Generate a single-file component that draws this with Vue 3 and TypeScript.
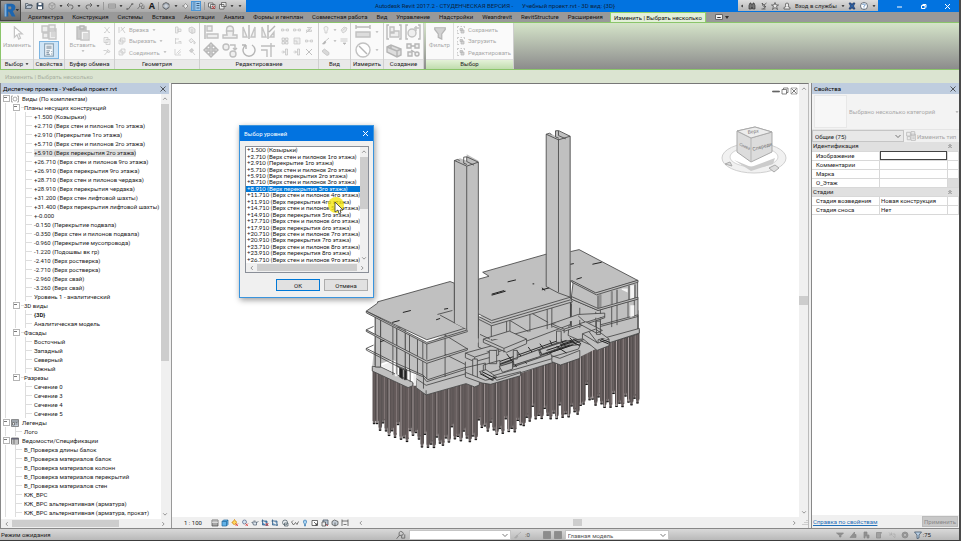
<script setup lang="ts">
import { h, ref, computed } from 'vue'

type Shape = [d: string, fill?: string, stroke?: string]

const G = '#c9c9c9'
const L = '#ececec'
const D = '#4a4a4a'

const shapes: Record<string, Shape[]> = {
  open: [['M1 13V3h5l1 2h6v3M1 13l3-6h11l-3 6z', '#b9c4d0', '#46505c']],
  save: [['M2 2h11l1 1v11H2z', '#465a70', '#2f3c4a'], ['M5 2h6v4H5zM4 9h8v5H4z', '#fff']],
  sync: [['M8 1l6 3v7l-6 4-6-4V4zM8 8v7M8 8l6-4M8 8L2 4', '#c2c2c2', '#8d8d8d']],
  undo: [['M6 2L2 6l4 4M2 6h8q4 0 4 4t-4 4', 'none', D]],
  redo: [['M10 2l4 4-4 4M14 6H6q-4 0-4 4t4 4', 'none', D]],
  dim: [['M1 4h14v8H1zM1 8h14', '#bbb', '#8b8b8b']],
  line: [['M2 14h3L12 4h3M2 12v4M12 2v4', 'none', D]],
  tag: [['M1 14l4-5M5 9V4q2-3 5-1t1 5zM9 9v4h5V7', 'none', '#666']],
  house: [['M8 1l6 3v7l-6 4-6-4V4z', '#9fa9b5', D], ['M2 8h12M8 4v8', 'none', '#eee']],
  section: [['M2 8h4M14 8l-5-5-4 5 4 5z', '#eee', '#777']],
  thin: [['M1 2h6M1 6h6M1 10h6M1 14h6', 'none', '#1c4e83'], ['M9 3h6M9 7h6M9 12h6', 'none', '#183553']],
  closeWin: [['M1 2h9v8H1zM5 5h9v8H5z', '#eee', D], ['M8 8l6 6M14 8l-6 6', 'none', '#d22']],
  switch: [['M1 5h9v9H1zM5 1h9v8H5z', '#eee', D]],
  bino: [['M2 14V7l2-5h2l1 4h2l1-4h2l2 5v7H9v-4H7v4z', '#777', '#333']],
  dish: [['M3 14h8M7 14l3-4M4 2q0 8 8 8zM8 6l5-4', '#ddd', '#444']],
  star: [['M8 1l2 5h5l-4 3 2 6-5-4-5 4 2-6-4-3h5z', '#e9e9e9', '#444']],
  user: [['M8 2q4 0 3 5l-1 2 4 2v3H2v-3l4-2-1-2Q4 2 8 2z', '#eee', '#444']],
  exch: [['M2 2h4l2 4 2-4h4l-3 6 3 6h-4l-2-4-2 4H2l3-6z', '#2c61a5', '#1d3766']],
  help: [['M8 1a7 7 0 1 1 0 14 7 7 0 0 1 0-14z', '#fff', '#345'], ['M5 6q1-3 4-2t0 4L8 9v2M8 12v1', 'none', '#1d5fa8']],
  arrow: [['M5 1v12l3-3 2 5 2-1-2-5h4z', '#fff', '#bcbcbc']],
  props: [['M1 2h6v6H1zM8 1h6v6H8zM2 9h5v5H2zM8 5h7v10H8z', L, '#bdbdbd'], ['M10 8h4M10 10h4M10 12h4', 'none', G]],
  palette: [['M3 1h10v14H3z', '#fff', '#7f9ab0'], ['M5 3h6v4H5z', '#a9b2ba'], ['M5 9h4M5 11h3M5 13h4M11 9v1M11 12v1', 'none', '#8796a4']],
  paste: [['M2 2h9v12H2z', '#c4c4c4', '#b5b5b5'], ['M5 1h4v3H5z', '#ddd', '#aaa'], ['M6 6h8v9H6z', '#f6f6f6', '#bbb'], ['M8 9h5M8 11h5M8 13h5', 'none', G]],
  cut: [['M3 2l9 11M13 2L4 13M2 13h3M11 13h3', 'none', '#bbb']],
  copy: [['M2 1h8v10H2zM6 5h8v10H6z', '#f5f5f5', '#bbb']],
  match: [['M3 14l7-8M9 3l5 4-3 3-4-4zM1 5h5', L, '#b8b8b8']],
  cope: [['M2 2v12M6 2l8 12M14 2L5 10', 'none', '#b5b5b5']],
  cutGeo: [['M5 2h9v8H5zM2 6h8v8H2z', '#f2f2f2', '#bdbdbd']],
  join: [['M6 2h8v8H6zM2 6q6-2 8 2v6H2z', '#f2f2f2', '#bdbdbd']],
  wall: [['M3 2h5v12H3zM8 6h6v5H8z', '#f0f0f0', '#bbb']],
  split: [['M2 4l6-2 6 4v7l-6 2-6-4zM8 6v9', '#e5e5e5', '#b9b9b9']],
  beam: [['M3 2v12M3 4h7M3 12h10M9 9h5v5', 'none', '#bbb']],
  paint: [['M2 7l5-4 4 4-5 5zM12 8l3 4-3 2z', '#ececec', '#bbb']],
  hammer: [['M3 5l5-4 3 4-5 4zM8 7l6 7', '#ccc', '#b5b5b5']],
  demol: [['M2 2v12h12M5 11l8-8M8 12l6-5', 'none', '#bbb']],
  align: [['M2 1v14', 'none', '#aaa'], ['M4 2h5v5H4zM4 10h11v4H4z', L, '#b8b8b8']],
  offset: [['M1 14h14v-3h-4q2-9-3-9T5 11H1zM4 7h8', '#eee', '#b8b8b8']],
  mirror: [['M2 13V3l4 10zM14 13V3l-4 10z', '#f1f1f1', '#bbb'], ['M8 1v14', 'none', '#aaa']],
  mirror2: [['M2 13V3l4 10zM14 13V8l-4 5z', '#f1f1f1', '#bbb'], ['M8 15V1M9 8l6-6', 'none', '#aaa']],
  move: [['M8 1l3 3H9v3h3V5l3 3-3 3V9H9v3h2l-3 3-3-3h2V9H4v2L1 8l3-3v2h3V4H5z', '#d8d8d8', '#adadad']],
  copyM: [['M4 2a3 3 0 1 1 0 6 3 3 0 0 1 0-6zM11 9a3 3 0 1 1 0 6 3 3 0 0 1 0-6z', '#eee', '#b5b5b5'], ['M8 3h5v4M11 6l2 2 2-2', 'none', '#b5b5b5']],
  rotate: [['M5 3a6 6 0 1 0 6 0M5 3v4M5 3H1', 'none', '#aaa']],
  trim: [['M1 4h10M1 8h6v7M11 1v3h4M11 6v9M11 4v3', 'none', '#b5b5b5']],
  sm1: [['M1 6h4v4H1zM11 6h4v4h-4zM6 8h4', L, '#bbb']],
  sm2: [['M2 2h5v5H2zM9 2h5v5H9zM2 9h5v5H2zM9 9h5v5H9z', L, '#b5b5b5']],
  sm3: [['M9 2v12h4V2zM1 8h6M4 5l3 3-3 3', L, '#b5b5b5']],
  scale: [['M2 2h12v12H2zM2 8h6v6', L, '#bbb']],
  pin: [['M4 3h8M8 3v7M3 8h10v3H3zM2 14l12-12', 'none', '#b9b9b9']],
  del: [['M2 2l12 12M14 2L2 14', 'none', '#999']],
  bulb: [['M8 1q5 0 4 5l-2 4v4H6v-4L4 6q-1-5 4-5z', '#f2f2f2', '#bbb']],
  link: [['M2 8l6-6 6 2-2 6-6 4zM5 9l6-5', '#e9e9e9', '#bbb']],
  brush: [['M14 2L6 9M6 8l2 2-3 4H1z', '#aaa', '#aaa']],
  weights: [['M1 4h14M1 8h14M6 12l3 3 3-3z', '#aaa', '#b0b0b0']],
  box3: [['M1 5l4-3 9 7v4l-4 2-9-7z', '#d4d4d4', '#b5b5b5']],
  meas: [['M1 3h14M1 1v4M15 1v4', 'none', '#b0b0b0'], ['M1 8h14v5H1z', '#d8d8d8', '#b8b8b8']],
  diam: [['M8 1a7 7 0 1 1 0 14 7 7 0 0 1 0-14z', '#fff', '#b8b8b8'], ['M4 4l8 8', 'none', '#aaa']],
  group: [['M3 1H1v14h2M13 1h2v14h-2', 'none', '#b0b0b0'], ['M4 3h4v5H4zM8 7h5v6H4V9h4z', L, '#b8b8b8']],
  similar: [['M3 1H1v14h2M13 1h2v14h-2', 'none', '#b0b0b0'], ['M7 5a4 4 0 1 1 0 8 4 4 0 0 1 0-8zM11 2v5M9 4h5', L, '#b8b8b8']],
  assembly: [['M1 5l4-2 10 4v6l-4 2-10-5zM1 5l10 4v6M11 9l4-2M5 3v3', '#d8d8d8', '#aaa']],
  parts: [['M2 2h4v4H2zM10 2h4v4h-4zM3 10h4v4H3zM12 10a2 2 0 1 1 0 4 2 2 0 0 1 0-4zM6 4h4M6 8l5 3', L, '#aaa']],
  funnel: [['M2 2h12v2l-4 5v6l-4-2V9L2 4z', '#ccc', '#aaa']],
  selSave: [['M1 4V1h3M7 1h3M13 1h2v3M1 8v3M1 13v2h3', 'none', '#aaa'], ['M6 5h5v4H6zM8 8h6v6H8z', '#ccc', '#aaa']],
  views: [['M4 2H1v12h3M12 2h3v12h-3', 'none', '#888'], ['M8 4a4 4 0 1 1 0 8 4 4 0 0 1 0-8z', '#fff', '#888']],
  legend: [['M1 1h14v14H1z', '#c5cfda', '#666'], ['M1 4h14M3 7h4v5H3zM9 7h4M9 10h4', '#eee', '#555']],
  sched: [['M1 2h14v12H1zM1 6h14M1 10h14M6 2v12', '#fff', '#555'], ['M1 2h14v3H1z', '#667']],
  vDetail: [['M2 2h12v12H2z', '#a8a8a8', D], ['M2 4h12M2 7h12', 'none', '#eee']],
  vCube: [['M2 5l3-3h9v9l-3 3H2zM2 5h9v9M11 5l3-3', '#62b2e8', '#24679b']],
  vSun: [['M7 3a4 4 0 1 1 0 8 4 4 0 0 1 0-8zM7 0v2M1 7h2', '#ffd75e', '#d38a10'], ['M9 9l5 5M14 9l-5 5', 'none', '#d22']],
  vShadow: [['M7 2a4 4 0 1 1 0 8 4 4 0 0 1 0-8z', '#d6e5f2', '#568'], ['M9 9l5 5M14 9l-5 5', 'none', '#d22']],
  vTea: [['M3 6h8v6H5zM11 7l4-2M1 7l2 1M5 4h4', '#dde6ef', '#4d5d6e']],
  vCrop: [['M3 1v11h11M1 4h11v10', '#5d98ce', '#24507c'], ['M9 8l6 6M15 8l-6 6', 'none', '#d22']],
  vCrop2: [['M3 1v11h11M1 4h11v10', '#8fb6d8', '#24507c']],
  vLock: [['M8 2a5 5 0 1 1 0 10A5 5 0 0 1 8 2zM7 8h7v6H7z', '#e7ecef', '#48565e']],
  vGlasses: [['M1 6l4 6 4-5 3 4 3-6M1 6l3-3', 'none', '#444']],
  vBulb: [['M8 2q4 0 3 5l-2 3v4H7v-4L5 7Q4 2 8 2z', '#a8d5f5', '#3a7ab0']],
  vBox: [['M2 3h11v10H2z', '#fff', '#333'], ['M6 6l6 6M12 8v4H8', 'none', '#333']],
  vHide: [['M4 2h10v10H4z', '#b9c6d4', '#345'], ['M2 6h7v8H2z', '#eee', '#444'], ['M10 10l4 4', 'none', '#c33']],
  vDots: [['M2 5l5-3 7 3v6l-6 3-6-3zM8 7v7', '#c6cfd8', '#444']],
  vDim: [['M2 1v13M14 1v13M2 4h12M5 11h6', 'none', '#444']],
  minus: [['M1 8h14v2H1z', '#666', '#666']],
  restore: [['M2 5h9v9H2zM5 5V2h9v9h-3', 'none', '#555']],
  boxX: [['M2 2h12v12H2z', 'none', '#888'], ['M3 3l10 10M13 3L3 13', 'none', '#444']],
  cross: [['M3 3l10 10M13 3L3 13', 'none', '#222']],
  gear: [['M8 2a6 6 0 1 1 0 12A6 6 0 0 1 8 2zM8 5a3 3 0 1 0 0 6 3 3 0 0 0 0-6z', '#9a9a9a', '#888']],
  sel1: [['M1 4h14l-5 5v3H7V9z', '#909090', '#888']],
  sel2: [['M2 13l9-11v5h3v6z', '#909090', '#888']],
  sel3: [['M4 2h6v6h4v6h-4v-4H6v4H4z', '#909090', '#888']],
  sel4: [['M3 3h10l-2 4v7H3z', '#a0a0a0', '#888']],
  sel5: [['M2 3l5 5M7 3v5H2M9 6h5v7M9 9l5 5', 'none', '#aaa']],
  funnelB: [['M1 2h14l-5 6v6l-4 1V8z', '#b9cfe4', '#34495e']],
  sq: [['M1 1h14v14H1z', '#8c8c8c', '#848484']],
  caret: [['M2 5h12l-6 7z', 'currentColor']],
  up: [['M3 10l5-5 5 5', 'none', '#444']],
  down: [['M3 6l5 5 5-5', 'none', '#444']],
  left: [['M10 3L5 8l5 5', 'none', '#444']],
  right: [['M6 3l5 5-5 5', 'none', '#444']],
  dblUp: [['M4 8l4-4 4 4M4 13l4-4 4 4', 'none', '#222']],
}

const Ic = (p: { n: string }) =>
  h('svg', { viewBox: '0 0 16 16', 'aria-hidden': 'true' },
    shapes[p.n].map(([d, f, s]) => h('path', { d, fill: f ?? 'none', stroke: s ?? 'none', 'stroke-width': 1.4 })))
Ic.props = ['n']

const quick = ['open', 'save', 'sync', '>', 'undo', '>', 'redo', '>', '|', 'dim', '>', 'line', 'tag', 'A', '|', 'house', '>', 'section', 'thin', '|', 'closeWin', 'switch', '>', '>']
const tabs = ['Архитектура', 'Конструкция', 'Системы', 'Вставка', 'Аннотации', 'Анализ', 'Формы и генплан', 'Совместная работа', 'Вид', 'Управление', 'Надстройки', 'Weandrevit', 'RevitStructure', 'Расширения']

const geometry = [
  { icon: 'cope', text: 'Врезка' },
  { icon: 'cutGeo', text: 'Вырезать' },
  { icon: 'join', text: 'Соединить' },
]
const editBig = ['align', 'offset', 'mirror', 'mirror2', 'move', 'copyM', 'rotate', 'trim']
const editSmall = ['sm1', 'sm1', 'pin', 'sm2', 'scale', 'sm1', 'sm3', 'sm3', 'del']
const selection = ['Сохранить', 'Загрузить', 'Редактировать']

interface Node { t: string; d: number; open?: boolean; icon?: string; bold?: boolean; sel?: boolean; tail?: boolean }
const leaf = (d: number, ...names: string[]): Node[] => names.map(t => ({ t, d }))
const tree: Node[] = [
  { t: 'Виды (По комплектам)', d: 0, open: true, icon: 'views' },
  { t: 'Планы несущих конструкций', d: 1, open: true },
  ...leaf(2, '+1.500 (Козырьки)', '+2.710 (Верх стен и пилонов 1го этажа)', '+2.910 (Перекрытие 1го этажа)', '+5.710 (Верх стен и пилонов 2го этажа)'),
  { t: '+5.910 (Верх перекрытия 2го этажа)', d: 2, sel: true },
  ...leaf(2, '+26.710 (Верх стен и пилонов 9го этажа)', '+26.910 (Верх перекрытия 9го этажа)', '+28.710 (Верх стен и пилонов чердака)',
    '+28.910 (Верх перекрытия чердака)', '+31.200 (Верх стен лифтовой шахты)', '+31.400 (Верх перекрытия лифтовой шахты)', '+-0.000',
    '-0.150 (Перекрытие подвала)', '-0.350 (Верх стен и пилонов подвала)', '-0.960 (Перекрытие мусопровода)', '-1.220 (Подошвы вк гр)',
    '-2.410 (Верх ростверка)', '-2.710 (Верх ростверка)', '-2.960 (Верх свай)', '-3.260 (Верх свай)', 'Уровень 1 - аналитический'),
  { t: '3D виды', d: 1, open: true },
  { t: '{3D}', d: 2, bold: true },
  ...leaf(2, 'Аналитическая модель'),
  { t: 'Фасады', d: 1, open: true },
  ...leaf(2, 'Восточный', 'Западный', 'Северный', 'Южный'),
  { t: 'Разрезы', d: 1, open: true },
  ...leaf(2, 'Сечение 0', 'Сечение 3', 'Сечение 4', 'Сечение 5').map(n => ({ ...n, tail: true })),
  { t: 'Легенды', d: 0, open: true, icon: 'legend' },
  ...leaf(1, 'Лого'),
  { t: 'Ведомости/Спецификации', d: 0, open: true, icon: 'sched' },
  ...leaf(1, 'В_Проверка длины балок', 'В_Проверка материалов балок', 'В_Проверка материалов колонн', 'В_Проверка материалов перекрытий',
    'В_Проверка материалов стен', 'КЖ_ВРС', 'КЖ_ВРС альтернативная (арматура)', 'КЖ_ВРС альтернативная (арматура, прокат)'),
]

const levels = ['+1.500 (Козырьки)', '+2.710 (Верх стен и пилонов 1го этажа)', '+2.910 (Перекрытие 1го этажа)', '+5.710 (Верх стен и пилонов 2го этажа)',
  '+5.910 (Верх перекрытия 2го этажа)', '+8.710 (Верх стен и пилонов 3го этажа)', '+8.910 (Верх перекрытия 3го этажа)', '+11.710 (Верх стен и пилонов 4го этажа)',
  '+11.910 (Верх перекрытия 4го этажа)', '+14.710 (Верх стен и пилонов 5го этажа)', '+14.910 (Верх перекрытия 5го этажа)', '+17.710 (Верх стен и пилонов 6го этажа)',
  '+17.910 (Верх перекрытия 6го этажа)', '+20.710 (Верх стен и пилонов 7го этажа)', '+20.910 (Верх перекрытия 7го этажа)', '+23.710 (Верх стен и пилонов 8го этажа)',
  '+23.910 (Верх перекрытия 8го этажа)', '+26.710 (Верх стен и пилонов 9го этажа)']
const chosen = ref(levels[6])

const viewIcons = ['vDetail', 'vCube', 'vSun', 'vShadow', 'vTea', 'vCrop', 'vCrop2', 'vLock', 'vGlasses', 'vBulb', 'vBox', 'vHide', 'vDots', 'vDim']
const statusIcons = ['sel1', 'sel2', 'sel3', 'sel4', 'sel5', 'gear']

// Piles: interpolate the head and toe profiles along the foundation.
const lerp = (pts: number[][], x: number) => {
  const i = Math.max(1, pts.findIndex(p => p[0] >= x))
  const [a, b] = [pts[i - 1], pts[i]]
  return a[1] + (b[1] - a[1]) * (x - a[0]) / (b[0] - a[0])
}
const heads = [[36, 240], [150, 288], [166, 290], [200, 315], [345, 280], [480, 250], [600, 215], [660, 205], [720, 170], [840, 125]]
const toes = [[36, 395], [70, 425], [135, 452], [158, 445], [166, 415], [178, 465], [196, 473], [240, 465], [285, 446], [345, 452], [366, 412], [415, 430],
  [470, 420], [505, 392], [550, 380], [600, 384], [660, 366], [680, 322], [716, 346], [765, 350], [840, 335]]
const piles = computed(() => {
  const out: { x: number; y: number; b: number; k: number }[] = []
  for (let x = 42, i = 0; x < 836; x += 9, i++) {
    const jag = [0, -8, 4, -26, -6, 4, -14, 2, -40][i % 9]
    out.push({ x, y: lerp(heads, x) - 10, b: lerp(toes, x) + jag, k: i % 4 })
  }
  return out
})
</script>

<template>
  <div class="app">
    <header class="head">
      <button class="logo" aria-label="Меню приложения">
        <svg viewBox="0 0 21 21"><path d="M4 4l2-1h6q4 1 4 4 0 3-3 4l3 6h-4l-3-5H8v5H4zM8 6v3h3q1-1 0-3z" fill="#1d66b0" /><path d="M4 4l2-1v14H4z" fill="#7fb2e0" /><path d="M16 9h4l-2 2z" fill="#222" /></svg>
      </button>
      <div class="title">
        <div class="quick">
          <template v-for="(q, i) in quick" :key="i">
            <Ic v-if="q === '>'" n="caret" class="tiny" />
            <i v-else-if="q === '|'" class="sep"></i>
            <button v-else-if="q === 'A'" class="bigA">A</button>
            <button v-else :class="{ on: q === 'thin' }" :aria-label="q"><Ic :n="q" class="i8" /></button>
          </template>
        </div>
        <h1><span>Autodesk Revit 2017.2 - СТУДЕНЧЕСКАЯ ВЕРСИЯ -</span><span>Учебный проект.rvt - 3D вид: {3D}</span></h1>
        <div class="info">
          <Ic n="caret" class="tiny turn" /><Ic n="bino" class="i8" /><Ic n="dish" class="i8" /><Ic n="star" class="i8" /><Ic n="user" class="i8" />
          <button>Вход в службы</button><Ic n="caret" class="tiny" /><Ic n="exch" class="i8" /><Ic n="help" class="i8" /><Ic n="caret" class="tiny" />
        </div>
        <div class="win">
          <button aria-label="Свернуть"><svg viewBox="0 0 7 7"><path d="M1 4h5" stroke="#fff" /></svg></button>
          <button aria-label="Развернуть"><svg viewBox="0 0 7 7"><path d="M1.500 2.500h3.500v3h-3.500zM2.500 1.500h3.500v3" stroke="#fff" fill="none" /></svg></button>
          <button aria-label="Закрыть"><svg viewBox="0 0 7 7"><path d="M1 1l5 5M6 1L1 6" stroke="#fff" /></svg></button>
        </div>
      </div>
      <nav class="tabs">
        <a v-for="t in tabs" :key="t" href="#">{{ t }}</a>
        <a href="#" class="active">Изменить | Выбрать несколько</a>
        <button class="pill" aria-label="Вид ленты"><svg viewBox="0 0 14 6"><path d="M.5.5h7v5h-7z" fill="#eee" stroke="#666" /><path d="M2.500 3.500h3z" stroke="#333" /><path d="M10 2h4l-2 3z" fill="#333" /></svg></button>
      </nav>
    </header>

    <section class="ribbon">
      <div class="panel p-mod">
        <div class="body"><button class="big"><Ic n="arrow" class="i14" /><span>Изменить</span></button></div>
        <footer>Выбор <Ic n="caret" class="tiny" /></footer>
      </div>
      <div class="panel p-prop">
        <div class="body stack"><button aria-label="Свойства типа"><Ic n="props" class="i16" /></button><button class="lit" aria-label="Палитра свойств"><Ic n="palette" class="i14" /></button></div>
        <footer>Свойства</footer>
      </div>
      <div class="panel p-clip">
        <div class="body">
          <button class="big"><Ic n="paste" class="i16" /><span>Вставить</span><Ic n="caret" class="tiny" /></button>
          <div class="col3"><Ic n="cut" class="i8" /><Ic n="copy" class="i8" /><Ic n="match" class="i8" /></div>
        </div>
        <footer>Буфер обмена</footer>
      </div>
      <div class="panel p-geo">
        <div class="body">
          <div class="col3 words"><button v-for="g in geometry" :key="g.text"><Ic :n="g.icon" class="i8" />{{ g.text }}<Ic n="caret" class="tiny" /></button></div>
          <div class="col3"><Ic n="wall" class="i8" /><Ic n="beam" class="i8" /><Ic n="demol" class="i8" /></div>
          <div class="col3"><Ic n="split" class="i8" /><Ic n="paint" class="i8" /><Ic n="hammer" class="i8" /></div>
        </div>
        <footer>Геометрия</footer>
      </div>
      <div class="panel p-edit">
        <div class="body">
          <div class="grid4"><button v-for="e in editBig" :key="e" :aria-label="e"><Ic :n="e" class="i16" /></button></div>
          <div class="grid3"><Ic v-for="(e, i) in editSmall" :key="i" :n="e" class="i8" /></div>
        </div>
        <footer>Редактирование</footer>
      </div>
      <div class="panel p-view">
        <div class="body">
          <div class="col3"><Ic n="bulb" class="i8" /><Ic n="brush" class="i8" /><Ic n="box3" class="i8" /></div>
          <div class="col3 arrows"><Ic n="caret" class="tiny" /><Ic n="caret" class="tiny" /><i></i></div>
          <div class="col3"><Ic n="link" class="i8" /><Ic n="weights" class="i8" /><i></i></div>
        </div>
        <footer>Вид</footer>
      </div>
      <div class="panel p-meas">
        <div class="body stack"><div><Ic n="meas" class="i16" /><Ic n="caret" class="tiny" /></div><div><Ic n="diam" class="i16" /><Ic n="caret" class="tiny" /></div></div>
        <footer>Измерить</footer>
      </div>
      <div class="panel p-make">
        <div class="body grid2"><Ic n="group" class="i16" /><Ic n="similar" class="i16" /><Ic n="assembly" class="i16" /><Ic n="parts" class="i16" /></div>
        <footer>Создание</footer>
      </div>
      <div class="panel p-sel">
        <div class="body">
          <button class="big"><Ic n="funnel" class="i14" /><span>Фильтр</span></button>
          <div class="col3 words ruled"><button v-for="s in selection" :key="s"><Ic n="selSave" class="i8" />{{ s }}</button></div>
        </div>
        <footer>Выбор</footer>
      </div>
    </section>
    <div class="options">Изменить | Выбрать несколько</div>

    <main class="main">
      <aside class="browser">
        <h2>Диспетчер проекта - Учебный проект.rvt<button aria-label="Закрыть"><Ic n="cross" class="i8" /></button></h2>
        <div class="treewrap">
          <ul class="tree">
            <li v-for="(n, i) in tree" :key="i">
              <template v-if="n.d === 0"><button class="tog" aria-label="Свернуть"></button><Ic :n="n.icon!" class="i8" /></template>
              <template v-else-if="n.open"><i class="g"></i><button class="tog" aria-label="Свернуть"></button><i class="dash"></i></template>
              <template v-else-if="n.d === 1"><i class="g"></i><i class="g br wide"></i></template>
              <template v-else><i class="g"></i><i class="g" :class="{ none: n.tail }"></i><i class="g br wide"></i></template>
              <span :class="{ bold: n.bold, sel: n.sel }">{{ n.t }}</span>
            </li>
          </ul>
          <div class="vbar"><Ic n="up" class="i6" /><i class="thumb tall"></i><Ic n="down" class="i6" /></div>
        </div>
        <div class="hbar"><Ic n="left" class="i6" /><i class="thumb wide"></i><Ic n="right" class="i6" /></div>
      </aside>

      <section class="view">
        <div class="stage">
          <div class="canvas">
            <svg class="model" viewBox="172 83 627 434">
              <g transform="translate(360 290) scale(.33333)" stroke="#444" stroke-width="2.500" fill="#c0c0c0" stroke-linejoin="round">
                <g>
                  <g v-for="p in piles" :key="p.x">
                    <path :d="`M${p.x - 5} ${p.y}H${p.x + 5}V${p.b - 8}H${p.x - 5}z`" fill="#665e5e" stroke="none" />
                    <path :d="`M${p.x - 3} ${p.y}V${p.b}h5V${p.y}z`" :fill="p.k === 1 ? '#d3c5c5' : '#6f6666'" :stroke="p.k === 1 ? '#2c2828' : '#575050'" stroke-width="2" />
                    <path :d="`M${p.x + 4} ${p.y}V${p.b - 12}`" :stroke="p.k === 3 ? '#c4b6b6' : '#4a4444'" stroke-width="2" />
                    <path :d="`M${p.x - 4} ${p.b}h7`" stroke="#111" stroke-width="3" />
                  </g>
                </g>
                <path d="M36 228L98 208 168 250V290L198 300 318 268 345 280 480 250 590 210 660 200 720 170 838 124V60L700 0 350 80 200 160 50 80z" stroke="none" />
                <path d="M36 228v14l108 50 14-6v-10l-96-46zM168 270v22l30 22 120-34 26 10 14-6v-14l-40-20-120 35-30-20M198 300v14" />
                <path d="M118 224v36l10 6v-36zM132 232v36h8v-30zM150 240v34" fill="#222" />
                <path d="M64 226l32-14v32zM104 222v36h8v-32zM160 250v36h8v-30z" fill="#eee" stroke="none" />
                <path d="M45 80v148M61 88v140M98 104v150M110 110v142M135 122v120M148 130v112M172 142v108M188 150v106M255 120v140M190 255v40M200 160v48M200 216v50" fill="none" />
                <path d="M45 80h16v150H45zM110 110h25v130l-25-12z" />
                <path d="M18 174l84 42 86 38 15 14 117-38M18 174v5l84 44 86 36 12 15 120-38" fill="none" />
                <path d="M255 192l60 30M255 134l68 42" fill="none" />
                <path d="M18 118l182 94 122-38v5l-122 40L18 123z" />
                <path d="M40 108l-22 10M40 164l-22 10" />
                <path d="M635 25l80 34 120-34v106l-130 38-80-34z" />
                <path d="M722 30v74M756 20v90M772 16v88M805 8v72M824 4v74M635 40v70M660 52v60M708 64v70M715 110l120-32M715 105l120-32v50" fill="none" />
                <path d="M715 148l124-34v14l-124 40z" />
                <path d="M640 -25l68 34 126-38v52l-120 36-80-34z" />
                <path d="M812-16h12v38l-12 4zM812 44h12v32l-12 4zM786-6h18v12l-18-8z" fill="#f4f4f4" stroke="none" />
                <path d="M715 15v42M722 12v42M756 2v40M772-2v42M808-14v44M826-18v42" fill="none" stroke-width="5" stroke="#555" />
                <path d="M715 15v42M722 12v42M756 2v40M772-2v42M808-14v44M826-18v42" fill="none" stroke-width="2" stroke="#bbb" />
                <path d="M635 18l80 36 120-34v6l-120 34-80-34z" />
                <path d="M355 82l40 18 237-68v70L400 190l-45-20z" />
                <path d="M394 100v50M440 88v50M450 86v48M510 70v54M562 56v60M576 52v60M450 90l56 34M515 68l50 28M632 34v74M395 150l240-66" fill="none" />
                <path d="M355 78l40 20 237-70 6 6-243 72-40-20z" />
                <path d="M420 220l180-66 80-10-90 40-160 56z" fill="#888" />
                <path d="M415 215l190-68M420 222l200-72M425 228l210-76M430 234l200-70M440 190l30 40M470 180l30 40M505 170l25 34M540 160l24 32M570 150l20 40M600 146l24 30M630 142l20 22" fill="none" stroke="#2a2a2a" stroke-width="3" />
                <path d="M18 62l34-24-0-4 218-61 13 5v80h72v-92l32-9-19-12 190-54 74-8 26-6 177 93-127 38-76-38v50l-237 70-40-20v38l-32 3-123 37z" />
                <path d="M18 62l182 94 124-38v5l-124 38L18 67zM636-30l72 37 127-38v6l-125 38-74-38z" />
                <path d="M232 72l45-12M240 74l82 44M632 25v-55" fill="none" />
                <path d="M283-391v489l40 20v48l32-10v-546l-35-20v20l-20-8z" stroke="none" />
                <path d="M283-391v489M355-386v530M320-374v490M283-391l37 17 35-12M283-391l10-3 6 4M311-383v-18l9-1 35 16M320-402v14l22 11M311-383l10 4" fill="none" />
                <path d="M559-470v458l36 18 37 14v-484l-36-16-10-3v18l-14-8z" stroke="none" />
                <path d="M559-470v458l36 19 36 13M631-464V20M596-455V5M559-470l37 17 35-11M559-470l10-3 6 4M587-462v-18l9-1 35 17M596-480v14l22 10M587-462l10 4" fill="none" />
                <path d="M316 188l80-22 20 8v20l-72 20-28-12zM316 188l28 12 70-22M344 200v14" />
                <path d="M338 206h14v60h-14zM316 214v40l30 14M316 232l60-14v30M370 224l50-14v28l-50 14zM388 180h22v40h-22z" />
                <path d="M370 146l78-24 52 24-0 14-60 26-70-30zM370 146l62 28 68-28M432 174v12M360 132l30 14" />
                <path d="M460 180h12v26h-12zM460 206l76-28 6 20-80 26z" />
                <path d="M358 244l20-6 32 22-14 10zM418 228l40-12v20l-30 10zM316 246l60 24 106-26v12l-90 26-26-4-50-18zM400 256l180-52v12L410 270zM540 178l60-20 6 12-60 22z" />
                <path d="M575 100l80-28 80-4v14l-120 40-40-16zM575 100l38 16 122-38M613 116v12M655 76l22 20" />
                <path d="M590 122h14v34h-14zM710 92h12v40h-12zM658 100l20-6 50 26-18 8zM668 130l40-14 40 30-34 12zM668 130v14l44 36 36-14v-20M688 124l26 34" />
                <path d="M576 200l80-24 6-14-30 4-60 20zM576 200v14l26 10 58-20v-24l-60 24-24-8" />
                <path d="M560 180l80-26M568 188l70-24M590 168l30 20M630 150l30 16M640 146l24 14M360 250l40 20M366 244l40 20M720 150l26 10M724 146l26 10" stroke="#222" stroke-width="3" />
                <path d="M395 14l42-12M395 11l38-11M443-26l25-6M128 66l24-6M96 96l22-6M60 154l12-4M228 88l12-4M252 56l12-2M546-2l22-6M546-8l10 8M632-79l10-2M698-79l28-6M650-34l16-5M518-20h5" stroke="#222" stroke-width="3" />
              </g>
            </svg>

            <svg class="cube" viewBox="0 0 68 50">
              <ellipse cx="34" cy="32" rx="32" ry="15" fill="#f1f1f1" stroke="#cfcfcf" /><ellipse cx="34" cy="31" rx="24" ry="10" fill="#fff" stroke="#d5d5d5" />
              <path d="M14 34l17 7 24-9-2 6-22 7z" fill="#ccc" />
              <path d="M17 5l18-4 17 5v20l-21 10-14-10z" fill="#dcdcdc" stroke="#a9a9a9" /><path d="M17 5l14 7v24M31 12l21-6" fill="none" stroke="#b5b5b5" /><path d="M17 5l18-4 17 5-21 6z" fill="#ededed" stroke="#aaa" />
              <path d="M5 38l5-2 2 4zM49 42l6-3 4 3-5 4z" fill="#ddd" stroke="#aaa" />
              <g font-size="5" fill="#777"><text x="28" y="8" transform="rotate(-8 28 8)">Верх</text><text x="19" y="19" transform="rotate(26 19 19)" font-size="4">Слева</text><text x="33" y="25" transform="rotate(-16 33 25)">Спереди</text></g>
            </svg>
            <div class="mdi"><Ic n="minus" class="i8" /><Ic n="restore" class="i8" /><Ic n="boxX" class="i8" /></div>

            <form class="dialog" role="dialog" aria-label="Выбор уровней" @submit.prevent>
              <h3>Выбор уровней<button type="button" aria-label="Закрыть"><svg viewBox="0 0 7 7"><path d="M1 1l5 5M6 1L1 6" stroke="#fff" /></svg></button></h3>
              <div class="list">
                <div class="rows">
                  <div class="opts"><label v-for="l in levels" :key="l" :class="{ cur: l === chosen }"><input v-model="chosen" type="radio" name="level" :value="l">{{ l }}</label></div>
                  <div class="vbar"><Ic n="up" class="i6" /><i class="thumb half"></i><Ic n="down" class="i6" /></div>
                </div>
                <div class="hbar"><Ic n="left" class="i6" /><i class="thumb long"></i><Ic n="right" class="i6" /></div>
              </div>
              <div class="acts"><button class="ok">ОК</button><button type="button">Отмена</button></div>
              <div class="pointer"><svg viewBox="0 0 18 18"><circle cx="8" cy="8" r="8" fill="#f4e500" opacity=".75" /><path d="M7 5v10l3-2 1 4 2-1-1-3h3z" fill="#fff" stroke="#333" stroke-width=".8" /></svg></div>
            </form>
          </div>
          <div class="vbar wide"><Ic n="up" class="i6" /><i class="thumb knot"></i><Ic n="down" class="i6" /></div>
        </div>
        <div class="viewbar">
          <button class="ratio">1 : 100</button>
          <button v-for="(v, i) in viewIcons" :key="i" :aria-label="v"><Ic :n="v" class="i8" /></button>
          <div class="hbar"><Ic n="left" class="i6" /><i class="thumb dot"></i><Ic n="right" class="i6" /></div>
          <svg class="grip" viewBox="0 0 6 6"><path d="M5 0v1M3 2v1M5 2v1M1 4v1M3 4v1M5 4v1" stroke="#aaa" /></svg>
        </div>
      </section>

      <aside class="props">
        <h2>Свойства<button aria-label="Закрыть"><Ic n="cross" class="i8" /></button></h2>
        <div class="type"><i></i><span>Выбрано несколько категорий</span><Ic n="caret" class="tiny" /></div>
        <div class="filter">
          <div class="combo"><select aria-label="Категория"><option>Общие (75)</option></select><Ic n="down" class="i8" /></div>
          <button><Ic n="props" class="i10" />Изменить тип</button>
        </div>
        <table>
          <tbody>
            <tr class="grp"><th colspan="2">Идентификация</th><td><Ic n="dblUp" class="i6" /></td></tr>
            <tr><th>Изображение</th><td class="edit"></td><td></td></tr>
            <tr><th>Комментарии</th><td></td><td></td></tr>
            <tr><th>Марка</th><td></td><td></td></tr>
            <tr><th>О_Этаж</th><td></td><td class="knob"></td></tr>
            <tr class="grp"><th colspan="2">Стадии</th><td><Ic n="dblUp" class="i6" /></td></tr>
            <tr><th>Стадия возведения</th><td>Новая конструкция</td><td></td></tr>
            <tr><th>Стадия сноса</th><td>Нет</td><td></td></tr>
          </tbody>
        </table>
        <div class="foot"><a href="#">Справка по свойствам</a><button disabled>Применить</button></div>
      </aside>
    </main>

    <footer class="status">
      <span class="msg">Режим ожидания</span>
      <div class="mid">
        <Ic n="tag" class="i10" />
        <div class="combo c1"><select aria-label="Рабочий набор"><option></option></select><Ic n="down" class="i8" /></div>
        <Ic n="brush" class="i8" /><span>:0</span>
        <Ic n="sq" class="i8 first" /><Ic n="sq" class="i8" />
        <div class="combo c2"><select aria-label="Вариант"><option>Главная модель</option></select><Ic n="down" class="i8" /></div>
      </div>
      <div class="end"><Ic v-for="s in statusIcons" :key="s" :n="s" class="i8" /><Ic n="funnelB" class="i8" /><span>:75</span></div>
    </footer>
  </div>
</template>

<style>
html, body, #app { height: 100%; }
body { margin: 0; overflow: hidden; }
</style>

<style scoped>
.app { font: 6px/9px Roboto, "Noto Sans", sans-serif; color: #1c1c1c; height: 100%; box-sizing: border-box; display: flex; flex-direction: column; border-right: 2px solid #4a4a4a; border-bottom: 1px solid #3c3c3c; background: #f0f0f0; overflow: hidden; }
.app * { box-sizing: border-box; }
button { font: inherit; color: inherit; background: none; border: 0; padding: 0; margin: 0; display: flex; align-items: center; white-space: nowrap; }
select { font: inherit; color: inherit; background: none; border: 0; padding: 0 2px; margin: 0; width: 100%; height: 100%; appearance: none; }
svg { display: block; flex: none; }
h1, h2, h3, ul { margin: 0; padding: 0; font: inherit; list-style: none; }
a { color: inherit; text-decoration: none; white-space: nowrap; }
.i6 { width: 6px; height: 6px; } .i8 { width: 8px; height: 8px; } .i10 { width: 10px; height: 10px; } .i14 { width: 14px; height: 14px; } .i16 { width: 16px; height: 16px; } .tiny { width: 4px; height: 4px; }

.head { display: grid; grid-template: 12px 10px / 21px 1fr; background: #999; }
.logo { grid-row: 1 / 3; background: linear-gradient(#999, #666); border: 1px solid #444; height: 21px; }
.logo svg { width: 19px; height: 19px; }
.title { background: #0273e0; display: flex; align-items: stretch; }
.quick { width: 225px; background: linear-gradient(#d4d4d4, #a9a9a9); display: flex; align-items: center; justify-content: space-between; padding: 0 4px; }
.quick .on { background: #9ccbf2; outline: 1px solid #4b95d6; }
.quick .sep { width: 1px; height: 8px; background: #999; }
.bigA { font: bold 9px/10px "Open Sans", sans-serif; }
h1 { flex: 1; display: flex; justify-content: center; gap: 9px; line-height: 12px; color: #0c2340; white-space: nowrap; padding-left: 6px; }
.info { width: 140px; height: 11px; background: linear-gradient(#ddd, #b5b5b5); display: flex; align-items: center; justify-content: space-between; padding: 0 2px; white-space: nowrap; }
.turn { transform: rotate(90deg); }
.win { width: 81px; display: flex; justify-content: space-around; align-items: center; padding-left: 9px; }
.win svg, .dialog h3 svg { width: 7px; height: 7px; }
.tabs { display: flex; gap: 9px; padding-left: 7px; line-height: 10px; color: #111; align-items: stretch; }
.tabs .active { background: #e3f0d8; border: 1px solid #8fd46a; border-bottom: 0; padding: 0 3px; margin-left: -2px; line-height: 9px; }
.pill svg { width: 14px; height: 6px; }

.ribbon { display: flex; height: 48px; border: 1px solid #8bc56b; border-width: 1px 0 1px 1px; background: linear-gradient(#d5e4c9, #8c8c8c); color: #a9a9a9; }
.ribbon .body svg { opacity: .85; }
.panel { background: #fafafa; border-right: 1px solid #cfcfcf; display: flex; flex-direction: column; }
.panel footer { height: 10px; line-height: 8px; background: #e9e9e9; color: #222; display: flex; justify-content: center; align-items: center; gap: 2px; border-top: 1px solid #dedede; padding-bottom: 1px; white-space: nowrap; }
.body { flex: 1; display: flex; min-height: 0; }
.p-mod { width: 33px; } .p-prop { width: 31px; } .p-clip { width: 50px; } .p-geo { width: 85px; } .p-edit { width: 119px; } .p-view { width: 32px; } .p-meas { width: 33px; } .p-make { width: 40px; } .p-sel { width: 88px; margin-left: 2px; }
.big { flex-direction: column; justify-content: flex-start; padding-top: 2px; flex: 1; line-height: 8px; }
.big .i14 { margin: 1px; }
.stack { flex-direction: column; align-items: center; justify-content: space-around; }
.stack > div { display: flex; align-items: center; gap: 4px; }
.lit { background: #cfe5f7; border: 1px solid #7db5e2; padding: 1px 2px; }
.col3 { display: flex; flex-direction: column; justify-content: space-around; align-items: flex-start; padding: 1px 3px; }
.col3 > i { height: 8px; }
.arrows .tiny { margin: 2px 0; }
.arrows { padding: 1px 0; }
.words { flex: 1; }
.words button { gap: 3px; }
.grid4 { display: grid; grid-template-columns: repeat(4, 19px); align-items: center; padding-left: 3px; }
.grid3 { display: grid; grid-template-columns: repeat(3, 12px); align-items: center; justify-items: center; padding: 1px 0; }
.grid2 { display: grid; grid-template-columns: 1fr 1fr; place-items: center; }
.p-sel .big { flex: none; width: 27px; }
.ruled { border-left: 1px solid #ddd; }
.p-sel footer { background: linear-gradient(#e4f2d8, #c0dcae); }
.options { height: 13px; flex: none; background: #dbe4d1; color: #a9b0a2; padding: 2px 5px; }

.main { flex: 1; min-height: 0; display: flex; }
h2 { height: 11px; line-height: 11px; background: #bfcddf; padding: 0 2px; display: flex; justify-content: space-between; align-items: center; color: #000; white-space: nowrap; }
.browser { width: 169px; display: flex; flex-direction: column; border-left: 1px solid #888; }
.treewrap { flex: 1; min-height: 0; display: flex; background: #fff; }
.tree { flex: 1; overflow: hidden; min-width: 0; }
.tree li { height: 9px; line-height: 8px; display: flex; align-items: center; white-space: nowrap; }
.tree .i8 { margin: 0 3px 0 0; }
.tog { width: 10px; height: 9px; justify-content: center; flex: none; }
.tog::before { content: ""; width: 5px; height: 5px; border: 1px solid #b5b5b5; background: linear-gradient(#777, #777) 0 1px / 3px 1px no-repeat; }
.g { width: 10px; height: 9px; flex: none; background: linear-gradient(#ddd, #ddd) 4px 0 / 1px 100% no-repeat; }
.g.br { background: linear-gradient(#ddd, #ddd) 4px 0 / 1px 100% no-repeat, linear-gradient(#ddd, #ddd) 4px 4px / 7px 1px no-repeat; }
.g.wide { width: 13px; }
.g.none { background: none; }
.dash { width: 3px; height: 1px; background: #ddd; }
.bold { font-weight: bold; }
.sel { background: #e0e0e0; }

.vbar { width: 8px; background: #f0f0f0; display: flex; flex-direction: column; align-items: center; padding: 2px 0; flex: none; }
.hbar { height: 9px; background: #f0f0f0; display: flex; align-items: center; padding: 0 3px; gap: 2px; }
.thumb { background: #cdcdcd; }
.vbar .thumb { width: 100%; margin: 2px 0 auto; }
.hbar .thumb { height: 7px; margin-right: auto; }
.tall { height: 61%; } .half { height: 46%; }
.hbar .thumb.wide { width: 66%; } .hbar .thumb.long { width: 88%; }

.view { flex: 1; min-width: 0; display: flex; flex-direction: column; border-left: 1px solid #999; margin-left: 2px; border-right: 1px solid #bbb; margin-right: 2px; border-top: 1px solid #777; }
.stage { flex: 1; min-height: 0; display: flex; }
.canvas { flex: 1; min-width: 0; position: relative; background: #fff; }
.model { width: 100%; height: 100%; }
.cube { position: absolute; right: 11px; top: 42px; width: 68px; height: 50px; }
.mdi { position: absolute; right: 1px; top: 3px; display: flex; gap: 1px; }
.vbar.wide { width: 9px; }
.vbar .knot { height: 9px; margin: auto 0; }
.viewbar { height: 11px; display: flex; align-items: center; gap: 2px; padding-left: 12px; }
.viewbar > button { width: 8px; }
.viewbar .ratio { width: 25px; }
.viewbar .hbar { flex: 1; margin-left: 4px; }
.hbar .dot { width: 9px; margin: 0 auto; }
.grip { width: 6px; height: 6px; }

.dialog { position: absolute; left: 67px; top: 41px; width: 135px; border: 1px solid #3a94dd; background: #f0f0f0; box-shadow: 1px 2px 6px #0006; }
.dialog h3 { height: 15px; background: #0273e0; color: #fff; display: flex; align-items: center; justify-content: space-between; padding: 0 4px; }
.list { margin: 5px 4px 0 5px; border: 1px solid #8a8f98; background: #fff; height: 127px; display: flex; flex-direction: column; }
.rows { flex: 1; min-height: 0; display: flex; }
.opts { flex: 1; min-width: 0; display: grid; grid-auto-rows: 1fr; font-family: Lato, "Liberation Sans", sans-serif; line-height: 6px; color: #111; }
.opts label { padding-left: 1px; white-space: nowrap; display: flex; align-items: center; min-height: 0; }
.opts input { appearance: none; width: 0; height: 0; margin: 0; }
.opts .cur { background: #0078d7; color: #fff; }
.acts { display: flex; justify-content: flex-end; gap: 4px; padding: 6px 5px; }
.acts button { width: 44px; height: 12px; justify-content: center; background: #e1e1e1; border: 1px solid #adadad; }
.acts .ok { border: 1px solid #0078d7; }
.pointer { position: absolute; left: 88px; top: 71px; width: 18px; pointer-events: none; }

.props { width: 148px; display: flex; flex-direction: column; background: #fff; border-left: 1px solid #888; }
.props h2 { flex: none; }
.type { height: 36px; display: flex; align-items: center; background: #f3f3f3; color: #a9a9a9; border-bottom: 1px solid #e5e5e5; }
.type i { width: 33px; height: 33px; margin: 1px 2px; border: 1px solid #e8e8e8; background: #f7f7f7; }
.type span { flex: 1; white-space: nowrap; }
.filter { height: 12px; display: flex; background: #f0f0f0; }
.combo { position: relative; display: flex; align-items: center; background: #fff; border: 1px solid #c5c5c5; }
.combo svg { position: absolute; right: 1px; }
.filter .combo { flex: 1; background: #e8e8e8; }
.filter button { width: 55px; gap: 1px; padding-left: 2px; color: #a5a5a5; }
table { border-collapse: collapse; table-layout: fixed; width: 100%; }
td, th { padding: 0 1px; height: 9px; line-height: 8px; border: 1px solid #d8d8d8; border-left: 0; border-top: 0; text-align: left; font-weight: normal; white-space: nowrap; }
th { width: 71px; padding-left: 4px; }
td:last-child { width: 6px; padding: 0; }
.grp th { padding-left: 1px; } .grp th, .grp td { background: #e0e0e0; border-right: 0; }
.edit { outline: 1px solid #444; outline-offset: -1px; }
.knob { background: #ddd; }
.foot { margin-top: auto; height: 13px; background: #f0f0f0; display: flex; justify-content: space-between; align-items: center; padding: 0 1px; }
.foot a { color: #1e6fb8; text-decoration: underline; }
.foot button { width: 36px; height: 11px; justify-content: center; background: #c8c8c8; border: 1px solid #bbb; color: #888; }

.status { height: 12px; flex: none; border-top: 1px solid #888; background: linear-gradient(#d9d9d9, #b9b9b9); display: flex; align-items: center; }
.msg { width: 396px; padding-left: 1px; flex: none; }
.mid { display: flex; align-items: center; gap: 3px; flex: 1; color: #555; }
.mid .combo { height: 10px; }
.mid .first { margin-left: 10px; }
.c1 { width: 102px; } .c2 { width: 104px; }
.end { display: flex; align-items: center; gap: 5px; padding-right: 28px; }
.end span { margin-left: -4px; }
</style>
